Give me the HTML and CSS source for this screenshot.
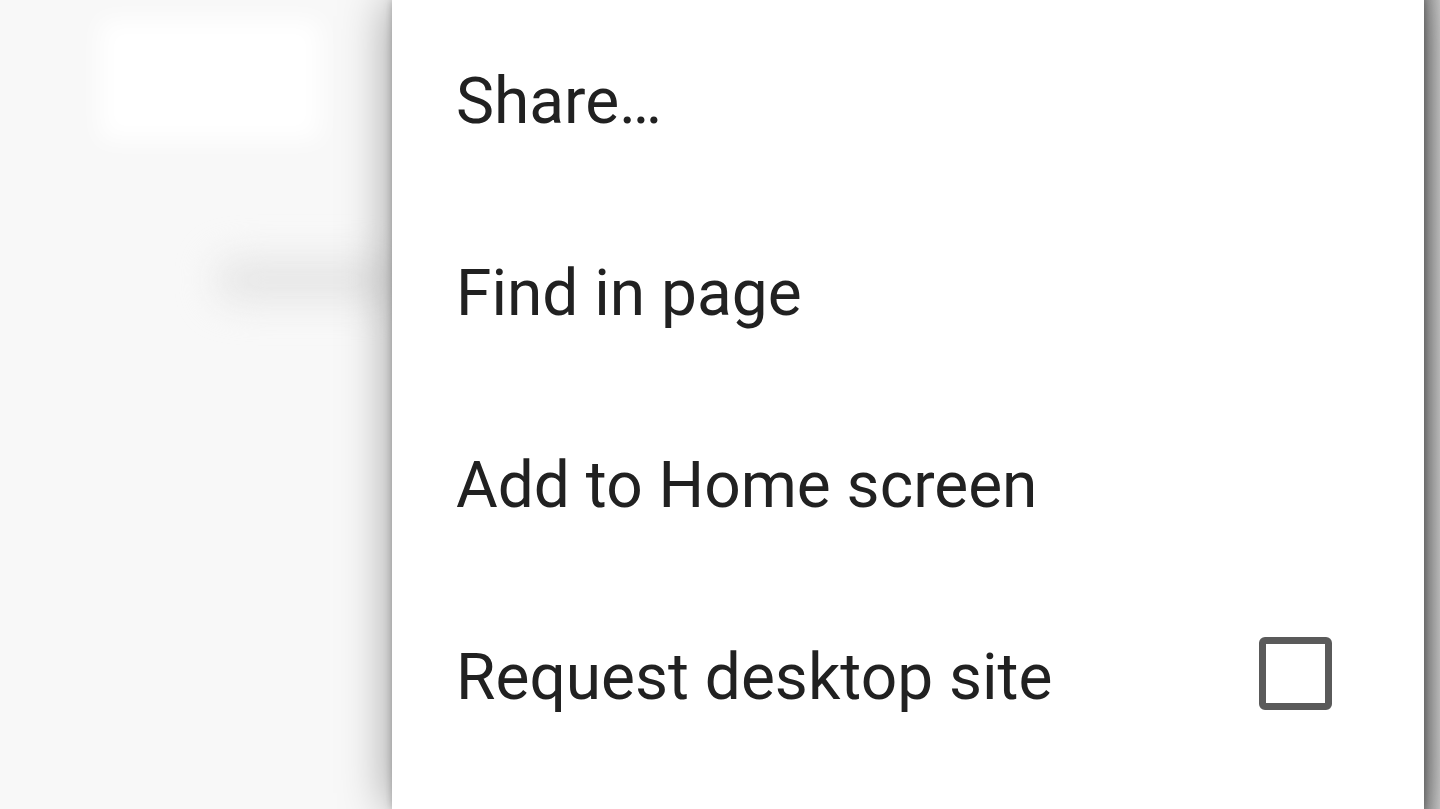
FILE: index.html
```html
<!DOCTYPE html>
<html lang="en">
<head>
  <meta charset="UTF-8" />
  <meta name="viewport" content="width=device-width, initial-scale=1.0"/>
  <title>Menu</title>
  <link rel="stylesheet" href="styles.css">
</head>
<body>
  <div class="backdrop">
    <div class="ghost-card"></div>
    <div class="ghost-text"></div>
  </div>

  <div class="menu">
    <div class="menu-item">Share…</div>
    <div class="menu-item">Find in page</div>
    <div class="menu-item">Add to Home screen</div>
    <div class="menu-item">
      <span>Request desktop site</span>
      <span class="checkbox"></span>
    </div>
  </div>

  <div class="edge"></div>
</body>
</html>
```

FILE: styles.css
```css
html, body {
  margin: 0;
  height: 100%;
  overflow: hidden;
}
body {
  display: flex;
  font-family: Roboto, "Liberation Sans", sans-serif;
  background-color: #f8f8f8;
  color: #212121;
}
.backdrop {
  width: 392px;
  flex-shrink: 0;
  padding-top: 20px;
  box-sizing: border-box;
}
.ghost-card {
  margin-left: 100px;
  width: 220px;
  height: 120px;
  background: #fff;
  filter: blur(12px);
}
.ghost-text {
  margin: 118px 0 0 215px;
  width: 180px;
  height: 44px;
  border-radius: 22px;
  background: #e6e6e6;
  filter: blur(18px);
}
.menu {
  width: 1032px;
  flex-shrink: 0;
  background: #fff;
  padding: 6px 92px 0 64px;
  box-sizing: border-box;
  position: relative;
  z-index: 1;
  box-shadow: -4px 0 45px rgba(0,0,0,0.35), 0 0 8px rgba(0,0,0,0.25);
}
.menu-item {
  height: 192px;
  line-height: 192px;
  font-size: 64px;
  display: flex;
  justify-content: space-between;
  align-items: center;
  white-space: nowrap;
}
.checkbox {
  width: 59px;
  height: 59px;
  border: 7px solid #5a5a5a;
  border-radius: 6px;
  margin-top: -10px;
}
.edge {
  flex: 1;
  background: linear-gradient(to right, #8f8f8f, #c4c4c4);
}
```
